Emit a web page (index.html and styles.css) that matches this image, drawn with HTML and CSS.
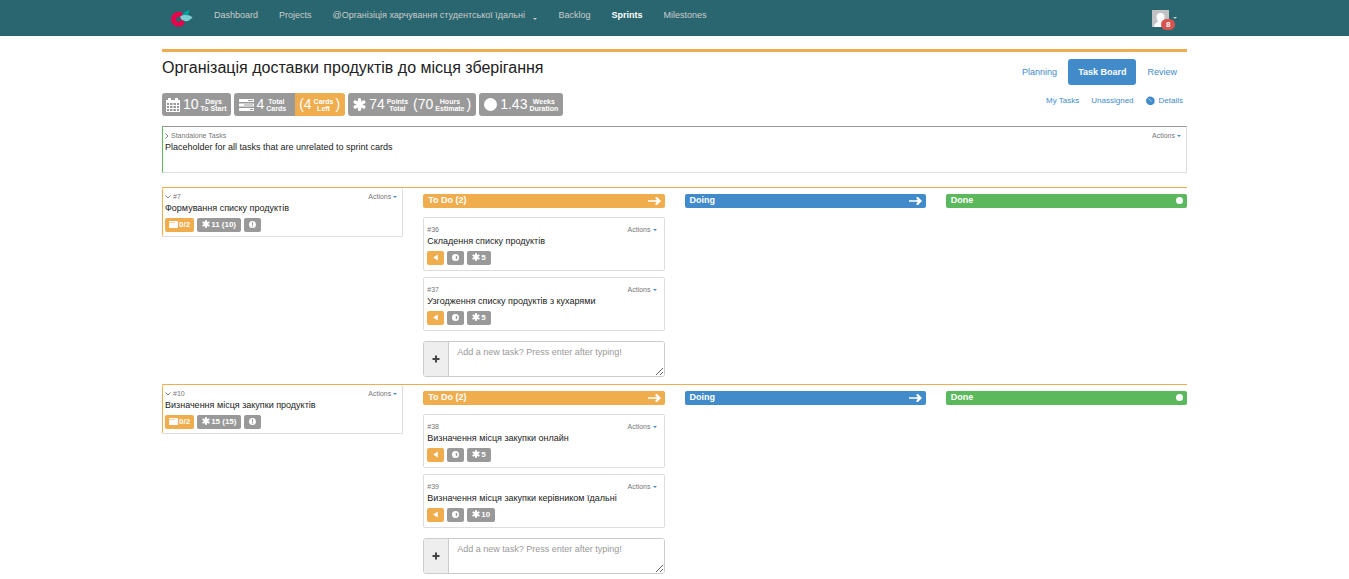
FILE: index.html
```html
<!DOCTYPE html>
<html lang="uk">
<head>
<meta charset="utf-8">
<title>Task Board</title>
<link rel="stylesheet" href="styles.css">
</head>
<body>
<svg class="sprite" aria-hidden="true">
  <symbol id="asterisk" viewBox="0 0 12 12"><path d="M6 1.500v9M2 3.700l8 4.600M10 3.700l-8 4.600" stroke="currentColor" stroke-width="3" stroke-linecap="round"/></symbol>
  <symbol id="tasks" viewBox="0 0 15 12"><path fill="currentColor" fill-rule="evenodd" d="M0 0h15v3H0zM9 1v1h5V1zM0 4.500h15v3H0zM5 5.500v1h9v-1zM0 9h15v3H0zM11 10v1h3v-1z"/></symbol>
  <symbol id="calendar" viewBox="0 0 14 14"><path fill="currentColor" fill-rule="evenodd" d="M0 2h2V0h3v2h4V0h3v2h2v12H0zM1 5v2h2V5zM4 5v2h2.500V5zM7.500 5v2H10V5zM11 5v2h2V5zM1 8v2h2V8zM4 8v2h2.500V8zM7.500 8v2H10V8zM11 8v2h2V8zM1 11v2h2v-2zM4 11v2h2.500v-2zM7.500 11v2H10v-2zM11 11v2h2v-2z"/></symbol>
  <symbol id="circle" viewBox="0 0 12 12"><circle cx="6" cy="6" r="6" fill="currentColor"/></symbol>
  <symbol id="info" viewBox="0 0 12 12"><path fill="currentColor" fill-rule="evenodd" d="M6 0a6 6 0 1 0 0 12A6 6 0 0 0 6 0zM5 2h2l-.2 5H5.200zM5 8h2v2H5z"/></symbol>
  <symbol id="half" viewBox="0 0 12 12"><path fill="currentColor" fill-rule="evenodd" d="M6 0a6 6 0 1 0 0 12A6 6 0 0 0 6 0zM6.500 2.500a3.600 3.600 0 0 1 0 7z"/></symbol>
  <symbol id="left" viewBox="0 0 12 12"><path fill="currentColor" d="M10 1v10L2 6z"/></symbol>
  <symbol id="card" viewBox="0 0 10 8"><path fill="currentColor" fill-rule="evenodd" d="M0 0h10v8H0zM0 1.600v.8h7v-.8z"/></symbol>
  <symbol id="arrow" viewBox="0 0 13 8"><path fill="none" stroke="currentColor" stroke-width="1.500" d="M0 4h9"/><path fill="currentColor" d="M7.500 0H9l4 4-4 4H7.500V6.500L9 4.800H7.500V3.200H9L7.500 1.500z"/></symbol>
  <symbol id="plus" viewBox="0 0 8 8"><path fill="none" stroke="currentColor" stroke-width="2" d="M4 .5v7M.5 4h7"/></symbol>
  <symbol id="right" viewBox="0 0 4 6"><path fill="none" stroke="currentColor" stroke-width=".9" d="M.5 .5L3 3 .5 5.500"/></symbol>
  <symbol id="down" viewBox="0 0 6 4"><path fill="none" stroke="currentColor" stroke-width=".9" d="M.5 .5L3 3 5.500 .5"/></symbol>
</svg>

<header class="navbar">
  <nav class="container nav">
    <a class="brand" href="#" aria-label="Home"><svg viewBox="0 0 22 17" width="22" height="17"><circle cx="7.500" cy="9.300" r="5" fill="none" stroke="#e5044b" stroke-width="5"/><path fill="#29666f" d="M10 8.300l5-5 4 9-5 1z"/><path fill="#00a2a0" d="M10.500 6c2-4 4.500-5 8-6-.2 3-1 5-4 6.500z"/><path fill="#7bcfd2" d="M9 6.500c5-2 9-2 12.500 1-3.500 4-7.500 5-11.500 1.500z"/></svg></a>
    <a href="#">Dashboard</a>
    <a href="#">Projects</a>
    <a href="#">@Організіція харчування студентської їдальні <i class="caret low"></i></a>
    <a href="#">Backlog</a>
    <a class="active" href="#">Sprints</a>
    <a href="#">Milestones</a>
    <button class="user" aria-label="Account, 8 notifications">
      <svg viewBox="0 0 17 17" width="17" height="17"><path fill="#c1c3c4" d="M0 0h17v17H0z"/><path fill="#fff" d="M8.500 3c2.400 0 4 1.500 4 4 0 2-1 3-1.500 4 .2 1.500 3.500 2 3.500 6H2c0-4 3.500-4 4-6C5 10 4.500 9 4.500 7c0-2.500 1.600-4 4-4z"/></svg>
      <i class="caret"></i><span class="count">8</span>
    </button>
  </nav>
</header>

<main class="container sprint">
  <div class="head">
    <div class="summary">
      <h1>Організація доставки продуктів до місця зберігання</h1>
      <div class="stats">
        <div class="stat"><svg width="14" height="14"><use href="#calendar"/></svg><b>10</b><small>Days<br>To Start</small></div>
        <div class="stat joined"><svg width="15" height="12"><use href="#tasks"/></svg><b>4</b><small>Total<br>Cards</small></div>
        <div class="stat orange"><b>(4</b><small>Cards<br>Left</small><b>)</b></div>
        <div class="stat wide"><svg width="13" height="13"><use href="#asterisk"/></svg><b>74</b><small>Points<br>Total</small><b class="next">(70</b><small>Hours<br>Estimate</small><b>)</b></div>
        <div class="stat wide"><svg width="13" height="13"><use href="#circle"/></svg><b>1.43</b><small>Weeks<br>Duration</small></div>
      </div>
    </div>
    <div class="views">
      <nav class="tabs"><a href="#">Planning</a><a class="current" href="#">Task Board</a><a href="#">Review</a></nav>
      <nav class="filters"><a href="#">My Tasks</a><a href="#">Unassigned</a><a href="#"><svg width="9" height="9" viewBox="0 0 9 9"><path fill="currentColor" d="M1 2l2-1.500 3 .2L8.500 3v4L6 9H3L.5 7 0 4z"/><path d="M2.500 2.500l3 3" stroke="#b9d5ee"/></svg> Details</a></nav>
    </div>
  </div>

  <section class="card standalone">
    <div class="meta"><button><svg width="4" height="6"><use href="#right"/></svg> Standalone Tasks</button><button>Actions <i class="caret"></i></button></div>
    <p>Placeholder for all tasks that are unrelated to sprint cards</p>
  </section>

  <section class="lane">
    <article class="card story">
      <div class="meta"><button><svg width="6" height="4"><use href="#down"/></svg> #7</button><button>Actions <i class="caret"></i></button></div>
      <p>Формування списку продуктів</p>
      <div class="labels"><span class="label orange tight"><svg width="9" height="7"><use href="#card"/></svg>0/2</span><span class="label"><svg width="8" height="8"><use href="#asterisk"/></svg>11 (10)</span><span class="label"><svg width="7" height="7"><use href="#info"/></svg></span></div>
    </article>
    <div class="column">
      <h2 class="orange">To Do (2) <svg width="13" height="8"><use href="#arrow"/></svg></h2>
      <article class="card task">
        <div class="meta"><a href="#">#36</a><button>Actions <i class="caret"></i></button></div>
        <p>Складення списку продуктів</p>
        <div class="labels"><span class="label orange"><svg width="7" height="7"><use href="#left"/></svg></span><span class="label"><svg width="7" height="7"><use href="#half"/></svg></span><span class="label"><svg width="8" height="8"><use href="#asterisk"/></svg>5</span></div>
      </article>
      <article class="card task">
        <div class="meta"><a href="#">#37</a><button>Actions <i class="caret"></i></button></div>
        <p>Узгодження списку продуктів з кухарями</p>
        <div class="labels"><span class="label orange"><svg width="7" height="7"><use href="#left"/></svg></span><span class="label"><svg width="7" height="7"><use href="#half"/></svg></span><span class="label"><svg width="8" height="8"><use href="#asterisk"/></svg>5</span></div>
      </article>
      <div class="add"><label for="add-7" aria-label="New task"><svg width="8" height="8"><use href="#plus"/></svg></label><textarea id="add-7" placeholder="Add a new task? Press enter after typing!"></textarea></div>
    </div>
    <div class="column"><h2 class="blue">Doing <svg width="13" height="8"><use href="#arrow"/></svg></h2></div>
    <div class="column"><h2 class="green">Done <svg width="7" height="7"><use href="#circle"/></svg></h2></div>
  </section>

  <section class="lane">
    <article class="card story">
      <div class="meta"><button><svg width="6" height="4"><use href="#down"/></svg> #10</button><button>Actions <i class="caret"></i></button></div>
      <p>Визначення місця закупки продуктів</p>
      <div class="labels"><span class="label orange tight"><svg width="9" height="7"><use href="#card"/></svg>0/2</span><span class="label"><svg width="8" height="8"><use href="#asterisk"/></svg>15 (15)</span><span class="label"><svg width="7" height="7"><use href="#info"/></svg></span></div>
    </article>
    <div class="column">
      <h2 class="orange">To Do (2) <svg width="13" height="8"><use href="#arrow"/></svg></h2>
      <article class="card task">
        <div class="meta"><a href="#">#38</a><button>Actions <i class="caret"></i></button></div>
        <p>Визначення місця закупки онлайн</p>
        <div class="labels"><span class="label orange"><svg width="7" height="7"><use href="#left"/></svg></span><span class="label"><svg width="7" height="7"><use href="#half"/></svg></span><span class="label"><svg width="8" height="8"><use href="#asterisk"/></svg>5</span></div>
      </article>
      <article class="card task">
        <div class="meta"><a href="#">#39</a><button>Actions <i class="caret"></i></button></div>
        <p>Визначення місця закупки керівником їдальні</p>
        <div class="labels"><span class="label orange"><svg width="7" height="7"><use href="#left"/></svg></span><span class="label"><svg width="7" height="7"><use href="#half"/></svg></span><span class="label"><svg width="8" height="8"><use href="#asterisk"/></svg>10</span></div>
      </article>
      <div class="add"><label for="add-10" aria-label="New task"><svg width="8" height="8"><use href="#plus"/></svg></label><textarea id="add-10" placeholder="Add a new task? Press enter after typing!"></textarea></div>
    </div>
    <div class="column"><h2 class="blue">Doing <svg width="13" height="8"><use href="#arrow"/></svg></h2></div>
    <div class="column"><h2 class="green">Done <svg width="7" height="7"><use href="#circle"/></svg></h2></div>
  </section>
</main>
</body>
</html>
```
FILE: styles.css
```css
* { box-sizing: border-box; }
body {
  margin: 0;
  font: 9px/13px "Liberation Sans", Arial, sans-serif;
  color: #222;
  background: #fff;
}
a { color: #428bca; text-decoration: none; }
button { font: inherit; color: inherit; background: none; border: 0; padding: 0; }
h1, h2, p { margin: 0; font-weight: normal; }
svg { display: block; flex: none; }
.sprite { display: none; }
.container { max-width: 1025px; margin: 0 auto; }
.caret {
  display: inline-block;
  border: 2px solid transparent;
  border-top-color: currentColor;
  border-bottom: 0;
  vertical-align: middle;
}

.navbar { background: #29666f; }
.nav { display: flex; align-items: center; height: 36px; gap: 21px; padding: 0 10px 0 9px; }
.nav a { color: #ccc; padding-bottom: 6px; }
.nav .brand { padding: 0; }
.nav .active { color: #fff; font-weight: bold; }
.low { margin: 8px 0 0 6px; }
.user { position: relative; display: flex; align-items: center; gap: 4px; margin-left: auto; color: #ccc; }
.count {
  position: absolute;
  left: 9px;
  top: 9px;
  padding: 0 5px;
  border-radius: 6px;
  background: #d9534f;
  color: #fff;
  font-size: 8px;
  line-height: 11px;
  font-weight: bold;
}

.sprint { margin-top: 13px; border-top: 3px solid #f0ad4e; }
.head { display: flex; justify-content: space-between; margin-bottom: 10px; }
h1 { font-size: 16px; line-height: 18px; margin: 7px 0 16px; }
.stats { display: flex; gap: 3px; }
.stat {
  display: flex;
  align-items: center;
  gap: 2px;
  height: 23px;
  padding: 0 4px;
  border-radius: 3px;
  background: #999;
  color: #fff;
}
.stat b { font-size: 14px; font-weight: normal; }
.stat small { font-size: 7px; line-height: 7px; font-weight: bold; text-align: center; }
.stat svg { margin-right: 1px; }
.stat .next { margin-left: 3px; }
.stat.wide { padding: 0 5px; }
.stat.joined { border-radius: 3px 0 0 3px; margin-right: -3px; padding: 0 9px 0 5px; }
.stat.joined + .stat { border-radius: 0 3px 3px 0; padding-right: 5px; }
.orange, .stat.orange { background: #f0ad4e; }
.blue { background: #428bca; }
.green { background: #5cb85c; }

.views { display: flex; flex-direction: column; align-items: flex-end; padding-top: 7px; }
.tabs { display: flex; gap: 1px; }
.tabs a { padding: 0 10px; line-height: 26px; }
.tabs .current { border-radius: 3px; background: #428bca; color: #fff; font-weight: bold; }
.filters { display: flex; gap: 12px; padding: 9px 4px 0 0; font-size: 8px; }
.filters a { display: flex; align-items: center; gap: 4px; }

.card { border: 1px solid #ddd; border-radius: 2px; padding: 3px 5px 4px 2px; }
.meta { display: flex; justify-content: space-between; font-size: 7px; line-height: 11px; }
.meta a, .meta button { display: flex; align-items: center; gap: 2px; color: #777; }
.meta .caret { color: #428bca; }
.standalone { min-height: 47px; border-top-color: #999; border-left-color: #5cb85c; border-radius: 0; margin-bottom: 14px; }

.lane {
  display: grid;
  grid-template-columns: repeat(4, 1fr);
  gap: 20px;
  align-items: start;
  border-top: 1px solid #f0ad4e;
  padding-bottom: 7px;
}
.story { border-top: 0; border-left-color: #f0ad4e; }
.labels { display: flex; gap: 3px; margin-top: 3px; }
.label {
  display: flex;
  align-items: center;
  gap: 1px;
  height: 14px;
  padding: 0 5px 2px;
  border-radius: 2px;
  background: #999;
  color: #fff;
  font-size: 8px;
  font-weight: bold;
}
.label.orange { background: #f0ad4e; }
.label.tight { padding-left: 4px; padding-right: 4px; }
.column { padding-top: 6px; }
.column h2 {
  display: flex;
  align-items: center;
  justify-content: space-between;
  height: 14px;
  margin-bottom: 9px;
  padding: 0 4px 1px 5px;
  border-radius: 2px;
  color: #fff;
  font-size: 9px;
  font-weight: bold;
}
.task { padding: 6px 7px 5px 3px; }
.task + .task { margin-top: 6px; }
.add { display: flex; height: 36px; margin-top: 10px; border: 1px solid #ccc; border-radius: 3px; overflow: hidden; }
.add label { display: flex; align-items: center; padding: 0 8px; background: #eee; border-right: 1px solid #ccc; color: #444; }
.add textarea {
  flex: 1;
  min-width: 0;
  border: 0;
  outline: 0;
  padding: 4px 8px;
  font: inherit;
  color: #555;
  resize: vertical;
}
.add textarea::placeholder { color: #999; }
```
